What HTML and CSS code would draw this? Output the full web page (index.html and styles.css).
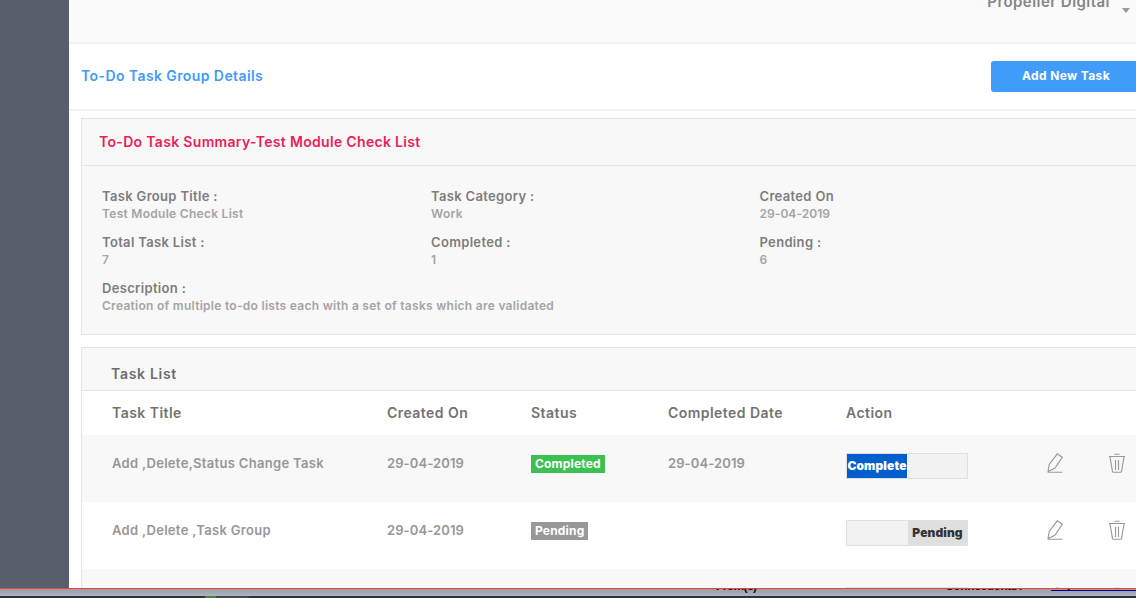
FILE: index.html
```html
<!DOCTYPE html>
<html lang="en">
<head>
<meta charset="utf-8">
<title>To-Do Task Group Details</title>
<link rel="stylesheet" href="styles.css">
</head>
<body>
<svg class="defs" width="0" height="0" aria-hidden="true">
  <symbol id="edit" viewBox="0 0 16 20"><path d="M1 18.5 2.2 11.5 10.3 .8 15.3 4.2 7.8 15.3 1 18.5M.5 19.2H15.5"/></symbol>
  <symbol id="trash" viewBox="0 0 16 20"><path d="M0 3.5H16M5.5 1.2H10.5M1 4 3.5 18.5Q3.7 19.2 4.5 19.2H11.5Q12.3 19.2 12.5 18.5L15 4M6.5 7V17M9.5 7V17"/></symbol>
</svg>
<div class="app">
  <aside class="sidebar"></aside>
  <main class="main">
    <header class="topbar"><span class="account">Propeller Digital</span><i class="caret"></i></header>
    <div class="titlebar"><h1 class="page-title">To-Do Task Group Details</h1><button class="add">Add New Task</button></div>
    <section class="panel summary">
      <h2 class="summary-title">To-Do Task Summary-Test Module Check List</h2>
      <dl class="facts">
        <div><dt>Task Group Title :</dt><dd>Test Module Check List</dd></div>
        <div><dt>Task Category :</dt><dd>Work</dd></div>
        <div><dt>Created On</dt><dd class="date">29-04-2019</dd></div>
        <div><dt>Total Task List :</dt><dd>7</dd></div>
        <div><dt>Completed :</dt><dd>1</dd></div>
        <div><dt>Pending :</dt><dd>6</dd></div>
        <div class="wide"><dt>Description :</dt><dd>Creation of multiple to-do lists each with a set of tasks which are validated</dd></div>
      </dl>
    </section>
    <section class="panel tasks">
      <h2 class="tasks-title">Task List</h2>
      <div class="row head"><span>Task Title</span><span>Created On</span><span>Status</span><span>Completed Date</span><span>Action</span></div>
      <div class="row shaded">
        <span>Add ,Delete,Status Change Task</span><span class="date">29-04-2019</span><span><b class="tag done">Completed</b></span><span class="date">29-04-2019</span>
        <span class="toggle"><b class="on">Complete</b></span>
        <svg class="icon"><use href="#edit"/></svg><svg class="icon"><use href="#trash"/></svg>
      </div>
      <div class="row">
        <span>Add ,Delete ,Task Group</span><span class="date">29-04-2019</span><span><b class="tag">Pending</b></span><span></span>
        <span class="toggle"><b class="off">Pending</b></span>
        <svg class="icon"><use href="#edit"/></svg><svg class="icon"><use href="#trash"/></svg>
      </div>
      <div class="row shaded"><span></span><span></span><span></span><span></span><span class="toggle"></span><svg class="icon"><use href="#edit"/></svg><svg class="icon"><use href="#trash"/></svg></div>
    </section>
  </main>
</div>
<footer class="strip">
  <div class="strip-text"><span class="from">From(s)</span><span class="conn">Connectional /</span><span class="link">Anp</span></div>
  <div class="dock"><i class="dock-green"></i><i class="dock-grey"></i></div>
</footer>
</body>
</html>
```
FILE: styles.css
```css
* { box-sizing: border-box; }
body { margin: 0; width: 1136px; height: 598px; overflow: hidden; background: #fff; font-family: Inter, "Liberation Sans", sans-serif; font-weight: 600; }
h1, h2, dl, dd { margin: 0; }
.defs { display: block; }
.app { display: flex; height: 588px; overflow: hidden; white-space: nowrap; }
.sidebar { flex: 0 0 69px; background: #585e6c; }
.main { flex: 1; min-width: 0; }
.topbar { display: flex; justify-content: flex-end; height: 44px; padding-right: 6px; background: #fafafa; border-bottom: 2px solid #f1f1f1; color: #868686; overflow: hidden; }
.account { margin-top: -8px; font-size: 15px; line-height: 20px; letter-spacing: .45px; }
.caret { margin: 8px 0 0 12px; width: 8px; height: 5px; border: 4px solid transparent; border-top: 5px solid #999; border-bottom: 0; }
.titlebar { display: flex; justify-content: space-between; align-items: center; height: 67px; padding-left: 12px; border-bottom: 2px solid #f1f1f1; }
.page-title { padding-bottom: 2px; font-size: 14px; line-height: 20px; font-weight: 600; letter-spacing: .41px; color: #419bf9; }
.add { width: 150px; height: 31px; margin-right: -5px; padding: 0 0 2px; border: 0; border-radius: 3px; background: #419bf9; color: #fff; font: 700 12px/20px Inter, sans-serif; letter-spacing: .36px; }
.panel { margin-left: 12px; margin-right: -10px; border: 1px solid #e4e4e4; background: #f8f8f8; }
.summary { margin-top: 7px; height: 217px; }
.summary-title { height: 47px; padding-left: 17px; border-bottom: 1px solid #e4e4e4; font-size: 14px; line-height: 46px; font-weight: 600; letter-spacing: .32px; color: #e91e5a; }
.facts { display: grid; grid-template-columns: 329px 328.5px 1fr; grid-auto-rows: 46px; padding: 21px 0 0 20px; }
.facts dt { margin-bottom: 1px; font-size: 13px; line-height: 18px; letter-spacing: .33px; color: #7d7d7d; }
.facts dd { font-size: 12px; line-height: 16px; letter-spacing: .28px; color: #a4a4a4; }
.facts dd.date { letter-spacing: .05px; }
.wide { grid-column: 1 / -1; }
.tasks { margin-top: 12px; }
.tasks-title { height: 43px; padding: 10px 0 0 29px; border-bottom: 1px solid #e4e4e4; font-size: 14px; line-height: 32px; font-weight: 600; letter-spacing: .7px; color: #6d6d6d; }
.row { display: grid; grid-template-columns: 275px 144px 137px 178px 201px 62px 30px; align-items: start; height: 67px; padding: 18px 0 0 30px; background: #fff; color: #979797; font-size: 13px; line-height: 20px; letter-spacing: .31px; }
.row .date { letter-spacing: .1px; }
.head { height: 44px; padding-top: 12px; font-size: 14px; letter-spacing: .45px; color: #737373; }
.shaded { background: #f8f8f8; }
.tag { display: inline-block; vertical-align: top; margin-top: 2px; height: 18px; padding: 0 4px; line-height: 18px; font-size: 12px; font-weight: 700; letter-spacing: .18px; color: #fff; background: #989898; }
.done { background: #3cc051; }
.toggle { display: flex; width: 122px; height: 26px; border: 1px solid #e0e0e0; background: #f2f2f2; font-size: 12px; line-height: 24px; letter-spacing: .1px; }
.on { width: 60px; background: #005fcd; color: #fff; text-align: center; overflow: hidden; }
.off { width: 59px; margin-left: auto; background: #dfdfdf; color: #333; text-align: center; }
.icon { width: 16px; height: 20px; fill: none; stroke: #999; stroke-width: 1.15; }
.strip { height: 10px; border-top: 1px solid #fa432f; }
.strip-text { position: relative; height: 7px; overflow: hidden; background: linear-gradient(#969eac, #acb3c1); font: 700 12px/14px "Liberation Sans", sans-serif; color: #111; }
.strip-text span { position: absolute; top: -10px; white-space: nowrap; }
.from { left: 716px; letter-spacing: -.6px; }
.conn { left: 945px; letter-spacing: -.35px; }
.strip-text .link { left: 1051px; top: -13px; width: 90px; height: 15px; border-bottom: 1px solid #000080; color: #000080; }
.dock { display: flex; height: 2px; padding-left: 205px; background: #30332f; }
.dock-green { width: 11px; background: #477e43; }
.dock-grey { width: 33px; background: #454545; }
```
